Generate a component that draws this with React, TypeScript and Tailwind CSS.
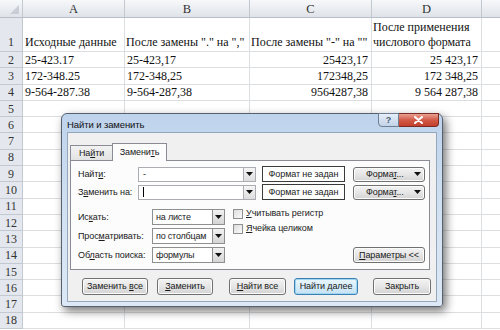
import React from "react";

const serif = { fontFamily: '"Liberation Serif", "Times New Roman", serif' };
const sans = { fontFamily: '"Liberation Sans", Arial, sans-serif' };

function Arrow() {
  return (
    <svg width="7" height="4" viewBox="0 0 7 4" className="shrink-0">
      <path d="M0 0h7L3.5 4z" fill="#111" />
    </svg>
  );
}

function U({ children }: { children: React.ReactNode }) {
  return <span className="underline underline-offset-[1px] decoration-[0.8px]">{children}</span>;
}

type Row = { a?: string; b?: string; c?: string; d?: string };

const data: Row[] = [
  { a: "25-423.17", b: "25-423,17", c: "25423,17", d: "25 423,17" },
  { a: "172-348.25", b: "172-348,25", c: "172348,25", d: "172 348,25" },
  { a: "9-564-287.38", b: "9-564-287,38", c: "9564287,38", d: "9 564 287,38" },
];

function Sheet() {
  const rows = [];
  for (let i = 2; i <= 18; i++) {
    const r = data[i - 2] || {};
    rows.push(
      <div key={i} className="flex h-[16.3px] shrink-0">
        <div className="w-[23px] shrink-0 bg-[#e4e8ee] border-r border-b border-[#c3c9d1] flex items-center justify-center text-[#333] text-[12px] leading-none">
          {i}
        </div>
        <div className="w-[102px] shrink-0 border-r border-b border-[#dcdfe2] flex items-center pl-[2px] whitespace-nowrap text-[12px] leading-none">{r.a}</div>
        <div className="w-[125px] shrink-0 border-r border-b border-[#dcdfe2] flex items-center pl-[2px] whitespace-nowrap text-[12px] leading-none">{r.b}</div>
        <div className="w-[122px] shrink-0 border-r border-b border-[#dcdfe2] flex items-center justify-end pr-[3px] whitespace-nowrap text-[12px] leading-none">{r.c}</div>
        <div className="w-[110px] shrink-0 border-r border-b border-[#dcdfe2] flex items-center justify-end pr-[3px] whitespace-nowrap text-[12px] leading-none">{r.d}</div>
        <div className="flex-1 border-b border-[#dcdfe2]"></div>
      </div>
    );
  }
  return (
    <div className="flex flex-col text-[#111]" style={serif}>
      <div className="flex h-[18px] shrink-0 bg-gradient-to-b from-[#f7f8fa] to-[#dfe3e9] border-b border-[#b7bec7]">
        <div className="w-[23px] shrink-0 border-r border-[#c3c9d1] relative">
          <div className="absolute right-[3px] bottom-[3px] w-0 h-0 border-l-[9px] border-l-transparent border-b-[9px] border-b-[#c9ced6]"></div>
        </div>
        {[
          ["A", "w-[102px]"],
          ["B", "w-[125px]"],
          ["C", "w-[122px]"],
          ["D", "w-[110px]"],
        ].map(([l, w]) => (
          <div key={l} className={`${w} shrink-0 border-r border-[#c3c9d1] flex items-center justify-center text-[12.5px] text-[#333] pt-[2px]`}>
            {l}
          </div>
        ))}
        <div className="flex-1"></div>
      </div>
      <div className="flex h-[34px] shrink-0">
        <div className="w-[23px] shrink-0 bg-[#e4e8ee] border-r border-b border-[#c3c9d1] flex items-end justify-center pb-[3px] text-[#333] text-[12px] leading-none">
          1
        </div>
        <div className="w-[102px] shrink-0 border-r border-b border-[#dcdfe2] flex items-end pl-[2px] pb-[3px] whitespace-nowrap text-[12px] leading-none">Исходные данные</div>
        <div className="w-[125px] shrink-0 border-r border-b border-[#dcdfe2] flex items-end pl-[1px] pb-[3px] whitespace-nowrap text-[12px] leading-none">После замены "." на ","</div>
        <div className="w-[122px] shrink-0 border-r border-b border-[#dcdfe2] flex items-end pl-[1px] pb-[3px] whitespace-nowrap text-[12px] leading-none">После замены "-" на ""</div>
        <div className="w-[110px] shrink-0 border-r border-b border-[#dcdfe2] flex flex-col justify-end pl-[1px] pb-[3px] whitespace-nowrap text-[12px] leading-[17px]">
          <span>После применения</span>
          <span className="leading-none">числового формата</span>
        </div>
        <div className="flex-1 border-b border-[#dcdfe2]"></div>
      </div>
      {rows}
    </div>
  );
}

function Btn({
  children,
  w,
  def,
  className = "",
}: {
  children: React.ReactNode;
  w: string;
  def?: boolean;
  className?: string;
}) {
  return (
    <div
      className={`${w} h-[17px] shrink-0 rounded-[3px] border ${
        def
          ? "border-[#3c7fb1] bg-gradient-to-b from-[#eaf6fd] to-[#c4e2f4] shadow-[inset_0_0_0_1px_#9fd7f2]"
          : "border-[#707070] bg-gradient-to-b from-[#f3f3f3] via-[#e6e6e6] to-[#d3d3d3] shadow-[inset_0_0_0_1px_#fcfcfc]"
      } flex items-center justify-center text-[9px] text-[#1a1a1a] leading-none ${className}`}
    >
      <span className="whitespace-nowrap">{children}</span>
    </div>
  );
}

function FormatBtn() {
  return (
    <div className="w-[72px] h-[15px] shrink-0 rounded-[3px] border border-[#707070] bg-gradient-to-b from-[#f3f3f3] via-[#e6e6e6] to-[#d3d3d3] shadow-[inset_0_0_0_1px_#fcfcfc] flex items-center text-[9px] leading-none text-[#1a1a1a] pl-[12px] pr-[3px]">
      <span className="flex-1">
        Форма<U>т</U>...
      </span>
      <Arrow />
    </div>
  );
}

function Combo({ w, text, caret }: { w: string; text?: string; caret?: boolean }) {
  return (
    <div className={`${w} h-[15px] shrink-0 border border-[#abadb3] bg-white flex items-stretch`}>
      <div className="flex-1 flex items-center pl-[4px] text-[9px] leading-none">
        {text}
        {caret && <div className="w-[1px] h-[10px] bg-black"></div>}
      </div>
      <div className="w-[12px] border-l border-[#abadb3] bg-gradient-to-b from-[#f5f5f5] to-[#dedede] flex items-center justify-center">
        <Arrow />
      </div>
    </div>
  );
}

function Select({ text }: { text: string }) {
  return (
    <div className="w-[73px] h-[16px] shrink-0 border border-[#8e8f8f] bg-white flex items-stretch">
      <div className="flex-1 flex items-center pl-[3px] text-[9px] leading-none whitespace-nowrap overflow-hidden tracking-[-0.2px]">{text}</div>
      <div className="w-[12px] border-l border-[#8e8f8f] bg-gradient-to-b from-[#f2f2f2] to-[#d5d5d5] flex items-center justify-center">
        <Arrow />
      </div>
    </div>
  );
}

function Check({ children }: { children: React.ReactNode }) {
  return (
    <div className="flex items-center h-[15px]">
      <div className="w-[10px] h-[10px] border border-[#8f8f8f] bg-gradient-to-br from-[#dcdcdc] to-[#fbfbfb]"></div>
      <span className="ml-[3px] text-[9px] leading-none text-[#222] whitespace-nowrap">{children}</span>
    </div>
  );
}

function Dialog() {
  return (
    <div
      className="absolute left-[61px] top-[113px] w-[382px] h-[194px] rounded-t-[6px] rounded-b-[3px] border border-[#56616f] bg-gradient-to-b from-[#bed3ec] via-[#d2e1f2] to-[#dce8f5] shadow-[3px_4px_10px_rgba(0,0,0,0.55)] flex flex-col px-[5px] pb-[4px] text-[#1a1a1a] tracking-[-0.1px]"
      style={sans}
    >
      <div className="relative h-[18px] shrink-0 flex items-center">
        <span className="pt-[4px] text-[9.5px] leading-none text-[#111]">Найти и заменить</span>
        <div className="absolute right-[-2px] top-[-1px] flex">
          <div className="w-[21px] h-[14px] rounded-bl-[4px] border border-[#6d7f94] bg-gradient-to-b from-[#e6eef8] to-[#c2d2e6] flex items-center justify-center text-[9px] font-bold text-[#4a5b70] leading-none">
            ?
          </div>
          <div className="w-[40px] h-[14px] rounded-br-[4px] border border-l-0 border-[#7a2b22] bg-gradient-to-b from-[#e8a093] via-[#d25a47] to-[#c33f2b] flex items-center justify-center">
            <svg width="9" height="8" viewBox="0 0 9 8">
              <path d="M1 1l7 6M8 1L1 7" stroke="#fff" strokeWidth="2" strokeLinecap="round" />
            </svg>
          </div>
        </div>
      </div>
      <div className="flex-1 bg-[#f0f0f0] border border-[#95a7bb] flex flex-col pl-[2px]">
        <div className="flex items-end mt-[10px] h-[18px] -mb-[1px] relative z-10">
          <div className="w-[43px] h-[15px] border border-b-0 border-[#898c95] bg-gradient-to-b from-[#f2f2f2] to-[#e3e3e3] flex items-center justify-center text-[9px] leading-none -mr-[1px] mb-[1px]">
            <span>
              На<U>й</U>ти
            </span>
          </div>
          <div className="w-[55px] h-[18px] border border-b-0 border-[#898c95] bg-[#fcfcfc] flex items-center justify-center text-[9px] leading-none">
            <span>
              Замени<U>т</U>ь
            </span>
          </div>
        </div>
        <div className="w-[360px] h-[110px] border border-[#898c95] bg-[#fcfcfc] flex flex-col pt-[5px] pl-[7px] pr-[4px]">
          <div className="flex items-center h-[16px]">
            <span className="w-[60px] text-[9px] leading-none">
              Найт<U>и</U>:
            </span>
            <Combo w="w-[118px]" text="-" />
            <div className="ml-[6px] w-[83px] h-[16px] border-[1.5px] border-[#3a3a3a] bg-white flex items-center justify-center text-[9px] leading-none whitespace-nowrap">
              Формат не задан
            </div>
            <div className="ml-[8px]">
              <FormatBtn />
            </div>
          </div>
          <div className="flex items-center h-[16px] mt-[2px]">
            <span className="w-[60px] text-[9px] leading-none whitespace-nowrap">
              З<U>а</U>менить на:
            </span>
            <Combo w="w-[118px]" caret />
            <div className="ml-[6px] w-[83px] h-[16px] border-[1.5px] border-[#3a3a3a] bg-white flex items-center justify-center text-[9px] leading-none whitespace-nowrap">
              Формат не задан
            </div>
            <div className="ml-[8px]">
              <FormatBtn />
            </div>
          </div>
          <div className="flex mt-[9px]">
            <div className="flex flex-col gap-[3px]">
              <div className="flex items-center">
                <span className="w-[74px] text-[9px] leading-none">
                  Ис<U>к</U>ать:
                </span>
                <Select text="на листе" />
              </div>
              <div className="flex items-center">
                <span className="w-[74px] text-[9px] leading-none">
                  Прос<U>м</U>атривать:
                </span>
                <Select text="по столбцам" />
              </div>
              <div className="flex items-center">
                <span className="w-[74px] text-[9px] leading-none whitespace-nowrap">
                  Об<U>л</U>асть поиска:
                </span>
                <Select text="формулы" />
              </div>
            </div>
            <div className="ml-[8px] flex flex-col -mt-[3px]">
              <Check>
                <U>У</U>читывать регистр
              </Check>
              <Check>
                <U>Я</U>чейка целиком
              </Check>
            </div>
            <div className="ml-auto self-end">
              <div className="w-[72px] h-[16px] rounded-[3px] border border-[#707070] bg-gradient-to-b from-[#f3f3f3] via-[#e6e6e6] to-[#d3d3d3] shadow-[inset_0_0_0_1px_#fcfcfc] flex items-center justify-center text-[9px] leading-none">
                <span className="whitespace-nowrap">
                  <U>П</U>араметры &lt;&lt;
                </span>
              </div>
            </div>
          </div>
        </div>
        <div className="flex mt-[8px] pl-[12px]">
          <Btn w="w-[66px]">
            Заменить <U>в</U>се
          </Btn>
          <Btn w="w-[56px]" className="ml-[9px]">
            <U>З</U>аменить
          </Btn>
          <Btn w="w-[57px]" className="ml-[16px]">
            <U>Н</U>айти все
          </Btn>
          <Btn w="w-[64px]" className="ml-[8px]" def>
            Найти <U>д</U>алее
          </Btn>
          <Btn w="w-[58px]" className="ml-[15px]">
            Закрыть
          </Btn>
        </div>
      </div>
    </div>
  );
}

export default function App() {
  return (
    <div className="relative w-[500px] h-[330px] overflow-hidden bg-white">
      <Sheet />
      <Dialog />
    </div>
  );
}
